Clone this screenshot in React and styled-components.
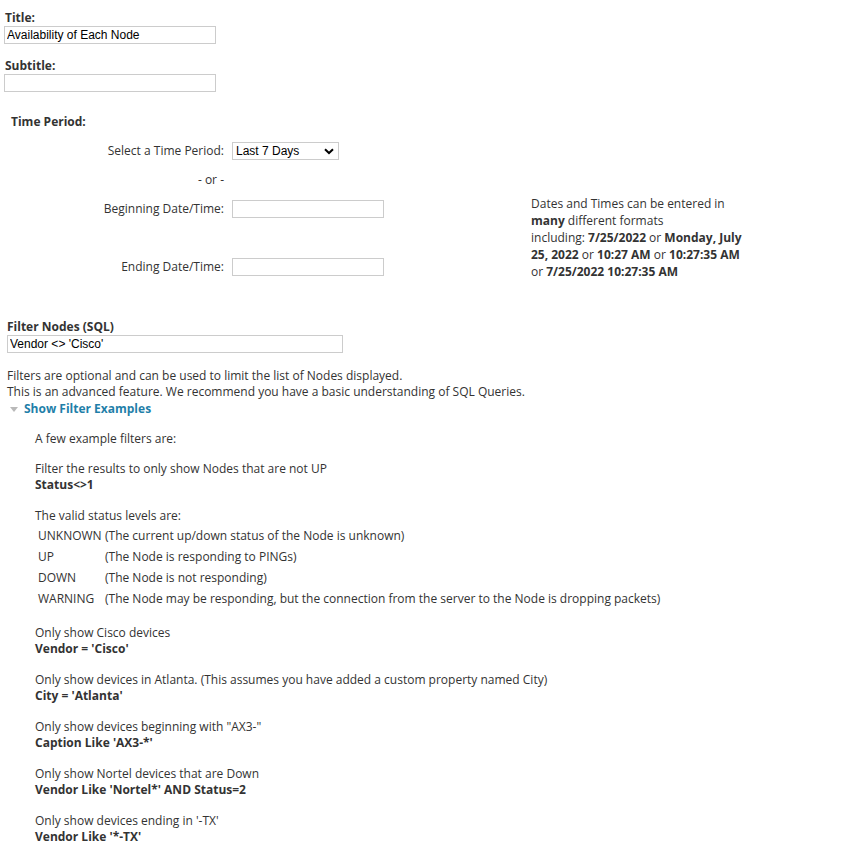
import React from "react";
import styled, { createGlobalStyle } from "styled-components";

const Global = createGlobalStyle`
  html, body { margin: 0; padding: 0; background: #fff; }
  body {
    font-family: "Open Sans", "DejaVu Sans", sans-serif;
    font-size: 12px;
    color: #333;
  }
  * { box-sizing: border-box; }
`;

const Page = styled.div`
  padding-top: 9px;
  width: 860px;
`;

const Field = styled.div`
  margin-left: ${(p) => p.$indent || 4}px;
  margin-top: ${(p) => p.$top || 0}px;
`;

const Label = styled.div`
  font-weight: 700;
  line-height: 17px;
  margin-left: ${(p) => (p.$flush ? 0 : 1)}px;
`;

const TextInput = styled.input`
  display: block;
  width: ${(p) => p.$w}px;
  height: 18px;
  border: 1px solid #cccccc;
  padding: 0 2px;
  margin: 0;
  font-family: "Liberation Sans", Arial, sans-serif;
  font-size: 12px;
  color: #000;
  background: #fff;
  outline: none;
`;

const SectionLabel = styled.div`
  font-weight: 700;
  line-height: 17px;
  margin: 21px 0 0 11px;
`;

const PeriodGrid = styled.div`
  display: grid;
  grid-template-columns: 224px 291px 230px;
  grid-template-rows: 31px 28px 30px 28px 29px;
  column-gap: 8px;
  margin-top: 5px;
  align-items: center;
`;

const RowLabel = styled.div`
  text-align: right;
  line-height: 16px;
  grid-column: 1;
  grid-row: ${(p) => p.$row};
`;

const Cell = styled.div`
  grid-column: 2;
  grid-row: ${(p) => p.$row};
  display: flex;
  align-items: center;
`;

const SelectWrap = styled.div`
  position: relative;
  width: 107px;
  height: 18px;
`;

const Select = styled.select`
  appearance: none;
  -webkit-appearance: none;
  width: 107px;
  height: 18px;
  border: 1px solid #cccccc;
  border-radius: 0;
  padding: 0 0 0 3px;
  margin: 0;
  font-family: "Liberation Sans", Arial, sans-serif;
  font-size: 12px;
  color: #000;
  background: #fff;
  outline: none;
`;

const Chevron = styled.svg`
  position: absolute;
  right: 5px;
  top: 6px;
  pointer-events: none;
`;

const Hint = styled.div`
  grid-column: 3;
  grid-row: 3 / 6;
  align-self: center;
  line-height: 17px;
  white-space: nowrap;
`;

const FilterSection = styled.div`
  margin: 37px 0 0 7px;
`;

const Description = styled.div`
  margin-top: 15px;
  line-height: 16px;
`;

const Toggle = styled.div`
  display: flex;
  align-items: center;
  margin-top: 1px;
  line-height: 16px;
  font-weight: 700;
  color: #1f7fa9;
  cursor: pointer;
`;

const Triangle = styled.span`
  display: inline-block;
  width: 0;
  height: 0;
  margin: 1px 6px 0 3px;
  border-left: 4px solid transparent;
  border-right: 4px solid transparent;
  border-top: 5px solid #b9b9b9;
`;

const Examples = styled.div`
  margin: 14px 0 0 28px;
  line-height: 16px;
`;

const Para = styled.div`
  margin-bottom: ${(p) => (p.$gap !== undefined ? p.$gap : 15)}px;
`;

const Code = styled.div`
  font-weight: 700;
`;

const StatusTable = styled.div`
  display: grid;
  grid-template-columns: 67px auto;
  grid-auto-rows: 21px;
  align-items: center;
  margin: 1px 0 16px 3px;
`;

const statuses = [
  ["UNKNOWN", "(The current up/down status of the Node is unknown)"],
  ["UP", "(The Node is responding to PINGs)"],
  ["DOWN", "(The Node is not responding)"],
  ["WARNING", "(The Node may be responding, but the connection from the server to the Node is dropping packets)"],
];

const examples = [
  ["Only show Cisco devices", "Vendor = 'Cisco'"],
  ["Only show devices in Atlanta. (This assumes you have added a custom property named City)", "City = 'Atlanta'"],
  ['Only show devices beginning with "AX3-"', "Caption Like 'AX3-*'"],
  ["Only show Nortel devices that are Down", "Vendor Like 'Nortel*' AND Status=2"],
  ["Only show devices ending in '-TX'", "Vendor Like '*-TX'"],
];

export default function App() {
  return (
    <Page>
      <Global />
      <Field>
        <Label>Title:</Label>
        <TextInput $w={212} defaultValue="Availability of Each Node" />
      </Field>
      <Field $top={13}>
        <Label>Subtitle:</Label>
        <TextInput $w={212} defaultValue="" />
      </Field>

      <SectionLabel>Time Period:</SectionLabel>
      <PeriodGrid>
        <RowLabel $row={1}>Select a Time Period:</RowLabel>
        <Cell $row={1}>
          <SelectWrap>
            <Select defaultValue="7">
              <option value="7">Last 7 Days</option>
            </Select>
            <Chevron width="10" height="7" viewBox="0 0 10 7">
              <path d="M1 1.2 L5 5 L9 1.2" fill="none" stroke="#000" strokeWidth="2" />
            </Chevron>
          </SelectWrap>
        </Cell>
        <RowLabel $row={2}>- or -</RowLabel>
        <RowLabel $row={3}>Beginning Date/Time:</RowLabel>
        <Cell $row={3}>
          <TextInput $w={152} />
        </Cell>
        <RowLabel $row={5}>Ending Date/Time:</RowLabel>
        <Cell $row={5}>
          <TextInput $w={152} />
        </Cell>
        <Hint>
          Dates and Times can be entered in
          <br />
          <b>many</b> different formats
          <br />
          including: <b>7/25/2022</b> or <b>Monday, July</b>
          <br />
          <b>25, 2022</b> or <b>10:27 AM</b> or <b>10:27:35 AM</b>
          <br />
          or <b>7/25/2022 10:27:35 AM</b>
        </Hint>
      </PeriodGrid>

      <FilterSection>
        <Label $flush>Filter Nodes (SQL)</Label>
        <TextInput $w={336} defaultValue="Vendor <> 'Cisco'" />
        <Description>
          Filters are optional and can be used to limit the list of Nodes displayed.
          <br />
          This is an advanced feature. We recommend you have a basic understanding of SQL Queries.
        </Description>
        <Toggle>
          <Triangle />
          Show Filter Examples
        </Toggle>
        <Examples>
          <Para $gap={14}>A few example filters are:</Para>
          <Para>
            Filter the results to only show Nodes that are not UP
            <Code>Status&lt;&gt;1</Code>
          </Para>
          <Para $gap={0}>The valid status levels are:</Para>
          <StatusTable>
            {statuses.map(([k, v]) => (
              <React.Fragment key={k}>
                <span>{k}</span>
                <span>{v}</span>
              </React.Fragment>
            ))}
          </StatusTable>
          {examples.map(([t, c]) => (
            <Para key={c}>
              {t}
              <Code>{c}</Code>
            </Para>
          ))}
        </Examples>
      </FilterSection>
    </Page>
  );
}
